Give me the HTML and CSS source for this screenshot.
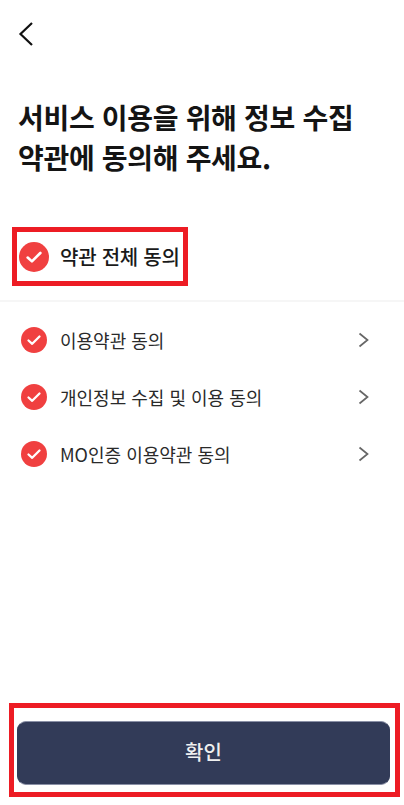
FILE: index.html
```html
<!DOCTYPE HTML>
<html lang="ko">

<head>
  <title>약관 동의</title>
  <meta charset="utf-8">
  <link rel="stylesheet" href="styles.css">
</head>

<body>
  <div class="page">
    <div class="top_bar">
      <svg class="back_icon" width="16" height="26" viewBox="0 0 16 26">
        <path d="M14 2 L2.5 13 L14 24" fill="none" stroke="#111" stroke-width="2.2" />
      </svg>
    </div>

    <h1 class="title">서비스 이용을 위해 정보 수집<br>약관에 동의해 주세요.</h1>

    <div class="agree_all">
      <svg class="check check_big" viewBox="0 0 26 26">
        <circle cx="13" cy="13" r="13" fill="#f04040" />
        <path d="M7.5 13.5 L11.2 16.8 L18.5 9.5" fill="none" stroke="#fff" stroke-width="2.3" stroke-linecap="round" stroke-linejoin="round" />
      </svg>
      <span class="agree_all_label">약관 전체 동의</span>
    </div>

    <div class="divider"></div>

    <ul class="terms">
      <li class="terms_row">
        <svg class="check" viewBox="0 0 26 26">
          <circle cx="13" cy="13" r="13" fill="#f04040" />
          <path d="M7.5 13.5 L11.2 16.8 L18.5 9.5" fill="none" stroke="#fff" stroke-width="2.3" stroke-linecap="round" stroke-linejoin="round" />
        </svg>
        <span class="terms_label">이용약관 동의</span>
        <svg class="chevron" width="12" height="16" viewBox="0 0 12 16">
          <path d="M1.5 1.5 L9.5 8 L1.5 14.5" fill="none" stroke="#666" stroke-width="1.7" />
        </svg>
      </li>
      <li class="terms_row">
        <svg class="check" viewBox="0 0 26 26">
          <circle cx="13" cy="13" r="13" fill="#f04040" />
          <path d="M7.5 13.5 L11.2 16.8 L18.5 9.5" fill="none" stroke="#fff" stroke-width="2.3" stroke-linecap="round" stroke-linejoin="round" />
        </svg>
        <span class="terms_label">개인정보 수집 및 이용 동의</span>
        <svg class="chevron" width="12" height="16" viewBox="0 0 12 16">
          <path d="M1.5 1.5 L9.5 8 L1.5 14.5" fill="none" stroke="#666" stroke-width="1.7" />
        </svg>
      </li>
      <li class="terms_row">
        <svg class="check" viewBox="0 0 26 26">
          <circle cx="13" cy="13" r="13" fill="#f04040" />
          <path d="M7.5 13.5 L11.2 16.8 L18.5 9.5" fill="none" stroke="#fff" stroke-width="2.3" stroke-linecap="round" stroke-linejoin="round" />
        </svg>
        <span class="terms_label">MO인증 이용약관 동의</span>
        <svg class="chevron" width="12" height="16" viewBox="0 0 12 16">
          <path d="M1.5 1.5 L9.5 8 L1.5 14.5" fill="none" stroke="#666" stroke-width="1.7" />
        </svg>
      </li>
    </ul>

    <div class="confirm_box">
      <button class="confirm_button">확인</button>
    </div>
  </div>
</body>

</html>
```

FILE: styles.css
```css
* {
  box-sizing: border-box;
}

body {
  margin: 0px;
  padding: 0px;
  background-color: #fff;
  font-family: "Noto Sans CJK KR", "Noto Sans", sans-serif;
  color: #1a1a1a;
}

.page {
  display: flex;
  flex-direction: column;
  height: 805px;
}

.top_bar {
  display: flex;
  align-items: center;
  height: 97px;
  padding: 0 0 29px 18px;
}

.back_icon {
  display: block;
}

.title {
  margin: 0;
  padding-left: 18px;
  font-size: 28px;
  font-weight: 700;
  line-height: 40px;
  letter-spacing: -0.32px;
  color: #141414;
}

.agree_all {
  display: flex;
  align-items: center;
  gap: 11px;
  width: 176px;
  height: 59px;
  margin: 50px 0 0 12px;
  padding-left: 2px;
  border: 5px solid #ed1c24;
}

.agree_all_label {
  font-size: 20px;
  font-weight: 500;
  letter-spacing: -0.25px;
  white-space: nowrap;
}

.check {
  flex: none;
  display: block;
  width: 26px;
  height: 26px;
}

.check_big {
  width: 30px;
  height: 30px;
}

.divider {
  height: 2px;
  margin-top: 14px;
  background-color: #f6f6f6;
}

.terms {
  margin: 0;
  padding: 9px 0 0 0;
  list-style: none;
}

.terms_row {
  display: flex;
  align-items: center;
  gap: 13px;
  height: 57px;
  padding: 0 34px 0 21px;
}

.terms_label {
  flex: 1;
  font-size: 18px;
  color: #2a2a2a;
}

.chevron {
  flex: none;
}

.confirm_box {
  height: 94px;
  margin: auto 4px 8px 9px;
  padding: 13px 5px 7px 3px;
  border: 5px solid #ed1c24;
}

.confirm_button {
  display: block;
  width: 100%;
  height: 100%;
  padding: 0 0 3px 0;
  border: 1px solid #323b58;
  border-top-color: #8a90a6;
  border-bottom-color: #8a90a6;
  border-radius: 9px;
  background-color: #323b58;
  font-family: inherit;
  font-size: 20px;
  font-weight: 500;
  color: #f0f0f0;
}
```
